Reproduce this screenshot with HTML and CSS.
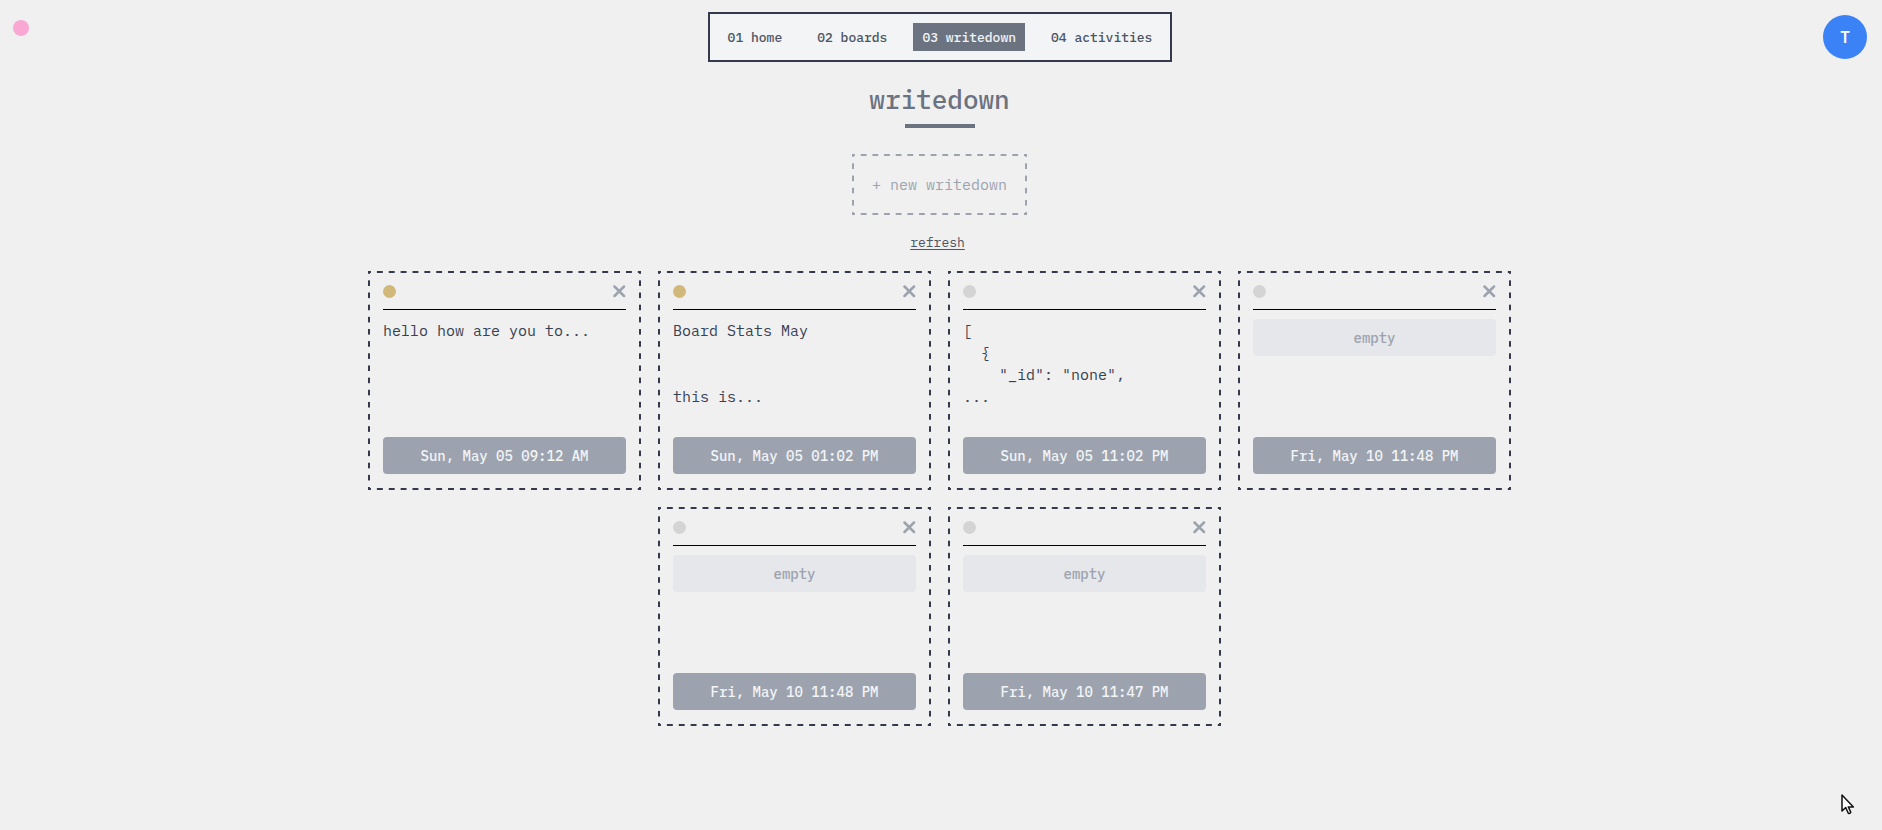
FILE: index.html
```html
<!DOCTYPE html>
<html lang="en">
<head>
<meta charset="utf-8">
<meta name="viewport" content="width=device-width, initial-scale=1">
<title>writedown</title>
<link rel="stylesheet" href="styles.css">
</head>
<body>
<svg class="symbols" aria-hidden="true">
  <symbol id="close" viewBox="0 0 13 13"><path d="M1.500 1.500l9.500 9.500M11 1.500L1.500 11" fill="none" stroke="currentColor" stroke-width="2.500" stroke-linecap="round"/></symbol>
</svg>
<header class="topbar">
  <span class="status"></span>
  <nav class="nav">
    <a class="nav-link" href="#home">01 home</a>
    <a class="nav-link" href="#boards">02 boards</a>
    <a class="nav-link active" href="#writedown" aria-current="page">03 writedown</a>
    <a class="nav-link" href="#activities">04 activities</a>
  </nav>
  <button class="avatar" type="button">T</button>
</header>
<main class="page">
  <h1 class="title">writedown</h1>
  <button class="new dashed" type="button">+ new writedown</button>
  <button class="refresh" type="button">refresh</button>
  <section class="cards">
    <article class="card dashed">
      <div class="card-head"><span class="dot starred"></span><button class="close" type="button" aria-label="Delete"><svg><use href="#close"/></svg></button></div>
      <pre class="text">hello how are you to...</pre>
      <time class="date">Sun, May 05 09:12 AM</time>
    </article>
    <article class="card dashed">
      <div class="card-head"><span class="dot starred"></span><button class="close" type="button" aria-label="Delete"><svg><use href="#close"/></svg></button></div>
      <pre class="text">Board Stats May


this is...</pre>
      <time class="date">Sun, May 05 01:02 PM</time>
    </article>
    <article class="card dashed">
      <div class="card-head"><span class="dot"></span><button class="close" type="button" aria-label="Delete"><svg><use href="#close"/></svg></button></div>
      <pre class="text">[
  {
    "_id": "none",
...</pre>
      <time class="date">Sun, May 05 11:02 PM</time>
    </article>
    <article class="card dashed">
      <div class="card-head"><span class="dot"></span><button class="close" type="button" aria-label="Delete"><svg><use href="#close"/></svg></button></div>
      <p class="empty">empty</p>
      <time class="date">Fri, May 10 11:48 PM</time>
    </article>
    <article class="card dashed">
      <div class="card-head"><span class="dot"></span><button class="close" type="button" aria-label="Delete"><svg><use href="#close"/></svg></button></div>
      <p class="empty">empty</p>
      <time class="date">Fri, May 10 11:48 PM</time>
    </article>
    <article class="card dashed">
      <div class="card-head"><span class="dot"></span><button class="close" type="button" aria-label="Delete"><svg><use href="#close"/></svg></button></div>
      <p class="empty">empty</p>
      <time class="date">Fri, May 10 11:47 PM</time>
    </article>
  </section>
</main>
<svg class="cursor" viewBox="0 0 14 21" aria-hidden="true"><path d="M1 1v16l3.700-3.500 2.600 5.800q1.800.6 2.500-1l-2.500-5.400h5.100z" fill="#fff" stroke="#111" stroke-width="1.500" stroke-linejoin="round"/></svg>
</body>
</html>
```

FILE: styles.css
```css
* {
  box-sizing: border-box;
}

body {
  margin: 0;
  min-height: 100vh;
  background: #f0f0f0;
  color: #374151;
  font-family: "IBM Plex Mono", "Liberation Mono", monospace;
}

button {
  padding: 0;
  border: 0;
  background: none;
  color: inherit;
  font: inherit;
  cursor: pointer;
}

.symbols {
  display: none;
}

/* Evenly spaced dashes that always meet in the corners */
.dashed {
  --dash: #343a4c;
  --row: linear-gradient(90deg, var(--dash) 25%, transparent 25% 75%, var(--dash) 75%);
  --column: linear-gradient(var(--dash) 25%, transparent 25% 75%, var(--dash) 75%);
  background:
    var(--row) 0 0 / 12px 2px,
    var(--row) 0 100% / 12px 2px,
    var(--column) 0 0 / 2px 12px,
    var(--column) 100% 0 / 2px 12px;
  background-repeat: round no-repeat, round no-repeat, no-repeat round, no-repeat round;
}

.topbar {
  display: grid;
  grid-template-columns: 1fr auto 1fr;
  align-items: center;
  padding: 12px 15px 0 13px;
}

.status {
  align-self: start;
  width: 16px;
  height: 16px;
  margin-top: 8px;
  border-radius: 50%;
  background: #f9a8d4;
}

.nav {
  display: flex;
  gap: 17px;
  padding: 9px;
  border: 2px solid #343a4c;
  background: #f3f4f6;
}

.nav-link {
  padding: 2px 9px 0;
  color: #4b5563;
  font-size: 13px;
  font-weight: 500;
  line-height: 26px;
  text-decoration: none;
}

.nav-link.active {
  background: #6b7280;
  color: #f3f4f6;
}

.avatar {
  justify-self: end;
  width: 44px;
  height: 44px;
  border-radius: 50%;
  background: #3b82f6;
  color: #fff;
  font-size: 16px;
  font-weight: 600;
}

.page {
  display: flex;
  flex-direction: column;
  align-items: center;
  padding: 20px 3px 0 0;
}

.title {
  display: flex;
  flex-direction: column;
  align-items: center;
  margin: 0;
  color: #6b7280;
  font-size: 26px;
  font-weight: 500;
  line-height: 34px;
}

.title::after {
  content: "";
  width: 70px;
  height: 4px;
  margin-top: 8px;
  background: #6b7280;
}

.new {
  --dash: #9ca3af;
  margin-top: 26px;
  padding: 20px;
  color: #9ca3af;
  font-size: 15px;
  line-height: 21px;
}

.refresh {
  margin: 18px 4px 18px 0;
  color: #4b5563;
  font-size: 13px;
  line-height: 20px;
  text-decoration: underline;
  text-underline-offset: 2px;
}

.cards {
  display: flex;
  flex-wrap: wrap;
  justify-content: center;
  gap: 17px;
  max-width: 1200px;
}

.card {
  display: flex;
  flex-direction: column;
  width: 273px;
  min-height: 219px;
  padding: 14px 15px 16px;
}

.card-head {
  display: flex;
  justify-content: space-between;
  margin-bottom: 9px;
  padding-bottom: 11px;
  border-bottom: 1px solid #000;
}

.dot {
  width: 13px;
  height: 13px;
  border-radius: 50%;
  background: #d4d4d4;
}

.dot.starred {
  background: #d0b87a;
}

.close {
  width: 13px;
  height: 13px;
  color: #9ca3af;
}

.close svg {
  display: block;
  width: 13px;
  height: 13px;
}

.text {
  margin: 0;
  padding-top: 1px;
  font-family: inherit;
  font-size: 15px;
  line-height: 22px;
}

.empty,
.date {
  margin: 0;
  padding-top: 1px;
  border-radius: 4px;
  font-size: 14px;
  font-weight: 500;
  line-height: 36px;
  text-align: center;
}

.empty {
  background: #e5e7eb;
  color: #9ca3af;
}

.date {
  margin-top: auto;
  background: #9ca3af;
  color: #f3f4f6;
}

.cursor {
  position: absolute;
  right: 27px;
  bottom: 15px;
  width: 14px;
  height: 21px;
}
```
